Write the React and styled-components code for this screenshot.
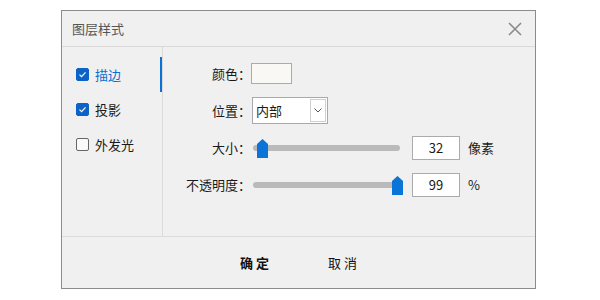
import React from 'react';
import styled, { createGlobalStyle } from 'styled-components';

const GlobalStyle = createGlobalStyle`
  html, body {
    margin: 0;
    padding: 0;
    background: #fff;
  }
  body {
    font-family: "Noto Sans CJK SC", "Noto Sans", sans-serif;
    font-size: 13px;
    color: #1a1a1a;
  }
`;

const Dialog = styled.div`
  box-sizing: border-box;
  width: 475px;
  height: 279px;
  margin: 10px 0 0 61px;
  border: 1px solid #8c8c8c;
  background: #f0f0f0;
  display: flex;
  flex-direction: column;
`;

const Header = styled.div`
  flex: none;
  height: 35px;
  display: flex;
  align-items: center;
  justify-content: space-between;
  padding: 0 12px 0 10px;
  border-bottom: 1px solid #d9d9d9;
`;

const Title = styled.div`
  font-size: 13px;
  color: #555;
`;

const CloseButton = styled.div`
  width: 16px;
  height: 16px;
  display: flex;
  align-items: center;
  justify-content: center;
  cursor: pointer;
`;

const Body = styled.div`
  flex: 1;
  display: flex;
`;

const Sidebar = styled.div`
  width: 100px;
  padding-top: 10px;
  border-right: 1px solid #dadada;
`;

const SideItem = styled.div`
  box-sizing: border-box;
  height: 35px;
  display: flex;
  align-items: center;
  gap: 6px;
  padding-left: 14px;
  border-right: 2px solid ${p => (p.$active ? '#0a72d6' : 'transparent')};
  color: ${p => (p.$active ? '#0a6fd0' : '#1a1a1a')};
`;

const Box = styled.span`
  box-sizing: border-box;
  width: 13px;
  height: 13px;
  border-radius: 2px;
  display: flex;
  align-items: center;
  justify-content: center;
  background: ${p => (p.$checked ? '#0b63c6' : '#fafafa')};
  border: 1px solid ${p => (p.$checked ? '#0b63c6' : '#666')};
`;

const Content = styled.div`
  flex: 1;
  padding-top: 8px;
  display: flex;
  flex-direction: column;
`;

const Row = styled.div`
  height: 37px;
  display: flex;
  align-items: center;
`;

const Label = styled.div`
  width: 88px;
  text-align: right;
  white-space: nowrap;
`;

const Swatch = styled.div`
  box-sizing: border-box;
  width: 41px;
  height: 21px;
  border: 1px solid #ababab;
  background: #faf8f4;
`;

const Select = styled.div`
  box-sizing: border-box;
  width: 76px;
  height: 27px;
  margin-left: 1px;
  padding-left: 3px;
  border: 1px solid #a9a9a9;
  background: #fff;
  display: flex;
  align-items: center;
`;

const DropButton = styled.div`
  box-sizing: border-box;
  width: 16px;
  height: 23px;
  margin: 0 1px 0 auto;
  border: 1px solid #d0d0d0;
  display: flex;
  align-items: center;
  justify-content: center;
`;

const SliderWrap = styled.div`
  position: relative;
  width: 147px;
  height: 20px;
  margin-left: 2px;
  display: flex;
  align-items: center;
`;

const Track = styled.div`
  width: 100%;
  height: 6px;
  border-radius: 3px;
  background: #bababa;
`;

const Thumb = styled.svg`
  position: absolute;
  top: 1px;
`;

const NumberBox = styled.div`
  box-sizing: border-box;
  width: 48px;
  height: 24px;
  margin-left: 12px;
  border: 1px solid #ababab;
  background: #fff;
  display: flex;
  align-items: center;
  justify-content: center;
`;

const Unit = styled.span`
  margin-left: 8px;
`;

const Footer = styled.div`
  flex: none;
  height: 51px;
  border-top: 1px solid #dcdcdc;
  display: flex;
  align-items: center;
  justify-content: center;
  gap: 12px;
`;

const Button = styled.button`
  width: 76px;
  height: 24px;
  padding: 0 0 0 3px;
  border: none;
  background: transparent;
  font-family: inherit;
  font-size: 13px;
  letter-spacing: 3px;
  color: #111;
  font-weight: ${p => (p.$primary ? 700 : 400)};
  cursor: pointer;
`;

const effects = [
  { name: '描边', checked: true, active: true },
  { name: '投影', checked: true },
  { name: '外发光', checked: false },
];

const Check = ({ checked }) => (
  <Box $checked={checked}>
    {checked && (
      <svg width="9" height="9" viewBox="0 0 9 9">
        <path d="M1.5 4.6 L3.6 6.6 L7.5 2.4" fill="none" stroke="#fff" strokeWidth="1.2" />
      </svg>
    )}
  </Box>
);

const Slider = ({ value, max }) => (
  <SliderWrap>
    <Track />
    <Thumb width="11" height="19" viewBox="0 0 11 19" style={{ left: (value / max) * 140 }}>
      <path d="M0 5 L5.5 0 L11 5 V19 H0 Z" fill="#0a74d8" />
    </Thumb>
  </SliderWrap>
);

export default function App() {
  return (
    <>
      <GlobalStyle />
      <Dialog>
        <Header>
          <Title>图层样式</Title>
          <CloseButton>
            <svg width="14" height="14" viewBox="0 0 14 14">
              <path d="M1 1 L13 13 M13 1 L1 13" stroke="#8a8a8a" strokeWidth="1.6" />
            </svg>
          </CloseButton>
        </Header>
        <Body>
          <Sidebar>
            {effects.map(e => (
              <SideItem key={e.name} $active={e.active}>
                <Check checked={e.checked} />
                <span>{e.name}</span>
              </SideItem>
            ))}
          </Sidebar>
          <Content>
            <Row>
              <Label>颜色：</Label>
              <Swatch />
            </Row>
            <Row>
              <Label>位置：</Label>
              <Select>
                <span>内部</span>
                <DropButton>
                  <svg width="8" height="5" viewBox="0 0 8 5">
                    <path d="M0.5 0.5 L4 4 L7.5 0.5" fill="none" stroke="#555" strokeWidth="1" />
                  </svg>
                </DropButton>
              </Select>
            </Row>
            <Row>
              <Label>大小：</Label>
              <Slider value={32} max={1000} />
              <NumberBox>32</NumberBox>
              <Unit>像素</Unit>
            </Row>
            <Row>
              <Label>不透明度：</Label>
              <Slider value={99} max={100} />
              <NumberBox>99</NumberBox>
              <Unit>%</Unit>
            </Row>
          </Content>
        </Body>
        <Footer>
          <Button $primary>确定</Button>
          <Button>取消</Button>
        </Footer>
      </Dialog>
    </>
  );
}
